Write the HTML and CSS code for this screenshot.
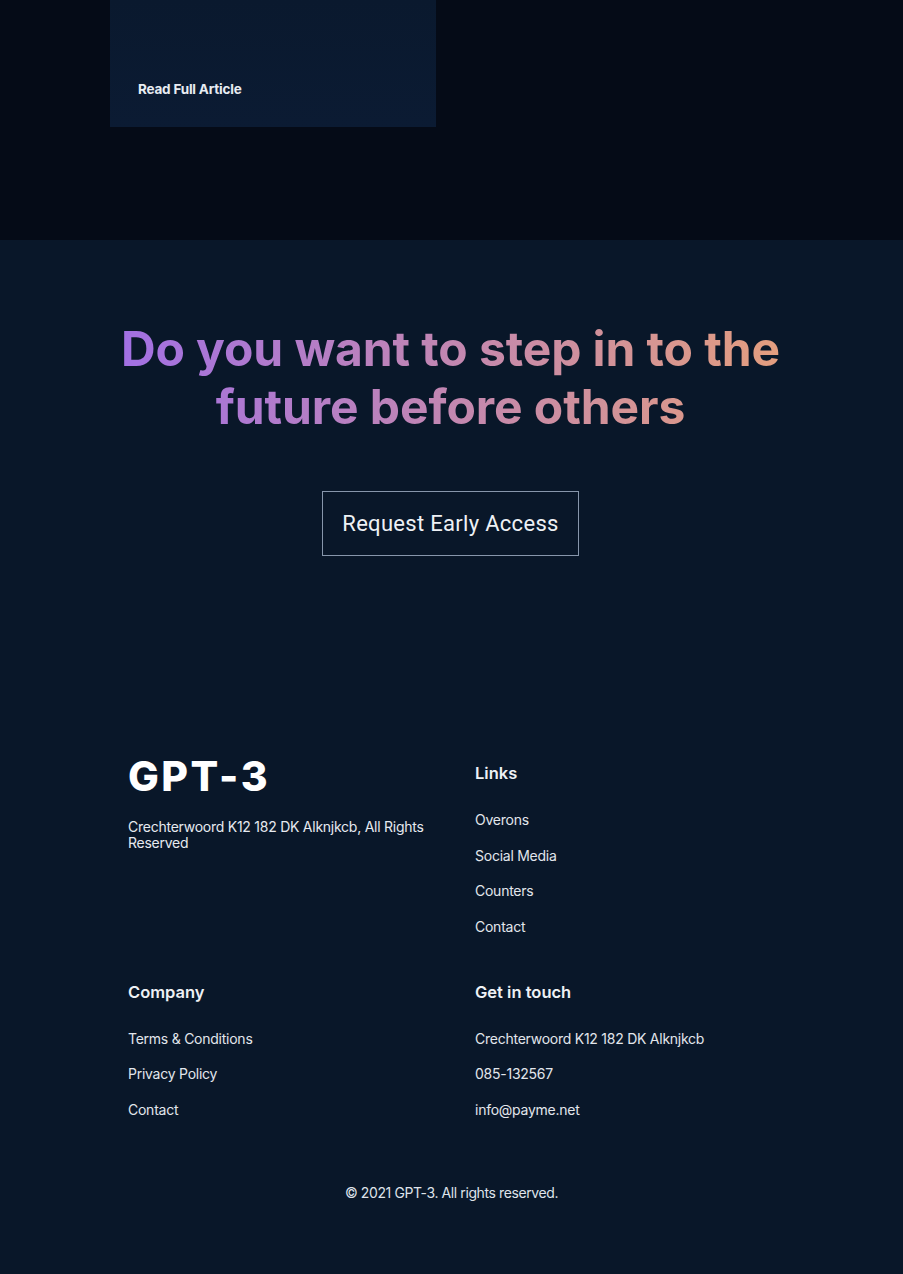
FILE: index.html
```html
<!DOCTYPE html>
<html lang="en">
<head>
<meta charset="utf-8">
<title>GPT-3</title>
<link rel="stylesheet" href="styles.css">
</head>
<body>
<section class="blog">
  <div class="blog-card">
    <p class="blog-link">Read Full Article</p>
  </div>
</section>
<footer class="footer">
  <div class="cta">
    <h2 class="cta-heading">Do you want to step in to the future before others</h2>
    <button class="cta-btn">Request Early Access</button>
  </div>
  <div class="footer-links">
    <div class="footer-col">
      <h3 class="logo">GPT-3</h3>
      <p class="address">Crechterwoord K12 182 DK Alknjkcb, All Rights Reserved</p>
    </div>
    <div class="footer-col">
      <h4 class="col-title">Links</h4>
      <ul class="col-list">
        <li>Overons</li>
        <li>Social Media</li>
        <li>Counters</li>
        <li>Contact</li>
      </ul>
    </div>
    <div class="footer-col">
      <h4 class="col-title">Company</h4>
      <ul class="col-list">
        <li>Terms &amp; Conditions</li>
        <li>Privacy Policy</li>
        <li>Contact</li>
      </ul>
    </div>
    <div class="footer-col">
      <h4 class="col-title">Get in touch</h4>
      <ul class="col-list">
        <li>Crechterwoord K12 182 DK Alknjkcb</li>
        <li>085-132567</li>
        <li>info@payme.net</li>
      </ul>
    </div>
  </div>
  <p class="copyright">© 2021 GPT-3. All rights reserved.</p>
</footer>
</body>
</html>
```

FILE: styles.css
```css
* { box-sizing: border-box; }
html, body { margin: 0; padding: 0; }
body {
  background: #091729;
  font-family: Inter, "Noto Sans", sans-serif;
  color: #ffffff;
}
.blog {
  height: 240px;
  background: #050b17;
  padding-left: 110px;
}
.blog-card {
  width: 326px;
  height: 127px;
  background: linear-gradient(180deg, #0a192e 0%, #0b1b33 100%);
  padding: 81px 0 0 28px;
}
.blog-link {
  margin: 0;
  font-size: 13.5px;
  font-weight: 700;
  letter-spacing: -0.2px;
  color: #e8ecf2;
}
.footer {
  background: #091729;
  padding: 80px 0 0;
}
.cta {
  display: flex;
  flex-direction: column;
  align-items: center;
  padding-right: 2px;
}
.cta-heading {
  margin: 0;
  width: 720px;
  text-align: center;
  font-size: 48px;
  line-height: 58px;
  font-weight: 700;
  letter-spacing: -0.1px;
  background: linear-gradient(90deg, #9f6ee8 0%, #e6a07a 100%);
  -webkit-background-clip: text;
  background-clip: text;
  color: transparent;
}
.cta-btn {
  margin-top: 55px;
  width: 257px;
  height: 65px;
  background: transparent;
  border: 1px solid #8796ab;
  color: #eef1f5;
  font-family: Roboto, "Liberation Sans", sans-serif;
  font-size: 22px;
  letter-spacing: 0.3px;
}
.footer-links {
  margin-top: 207px;
  padding-left: 128px;
  display: grid;
  grid-template-columns: 347px 347px;
  row-gap: 46px;
}
.logo {
  margin: 0;
  font-size: 41px;
  line-height: 26px;
  font-weight: 800;
  letter-spacing: 2.5px;
}
.address {
  margin: 30px 0 0;
  width: 310px;
  font-size: 14px;
  line-height: 16px;
  letter-spacing: -0.25px;
  color: #e6eaf0;
}
.col-title {
  margin: 0;
  font-size: 16.5px;
  line-height: 20px;
  font-weight: 600;
  letter-spacing: 0px;
  color: #eef1f5;
}
.col-list {
  list-style: none;
  margin: 28px 0 0;
  padding: 0;
  display: flex;
  flex-direction: column;
  gap: 17.5px;
}
.col-list li {
  font-size: 14px;
  line-height: 18px;
  letter-spacing: -0.25px;
  color: #e2e6ec;
}
.copyright {
  margin: 65px 0 0;
  padding-bottom: 74px;
  text-align: center;
  font-size: 14px;
  line-height: 17px;
  letter-spacing: -0.4px;
  color: #dfe3ea;
}
```
